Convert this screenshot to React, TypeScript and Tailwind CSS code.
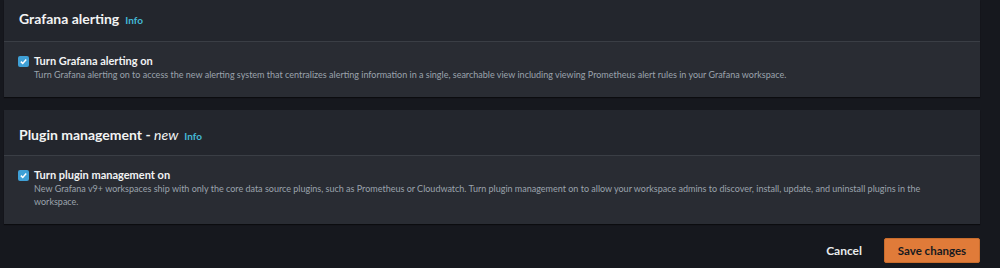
export default function App() {
  return (
    <div className="h-[268px] w-[1000px] overflow-hidden bg-[#16181e] pl-[4px] pr-[20px] font-['Lato',sans-serif] text-[#d1d5db]">
      <div className="flex flex-col">
        <Section
          title={<>Grafana alerting</>}
          label="Turn Grafana alerting on"
          description="Turn Grafana alerting on to access the new alerting system that centralizes alerting information in a single, searchable view including viewing Prometheus alert rules in your Grafana workspace."
          first
        />
        <div className="h-[13px]" />
        <Section
          title={
            <>
              Plugin management - <span className="font-normal italic">new</span>
            </>
          }
          label="Turn plugin management on"
          description="New Grafana v9+ workspaces ship with only the core data source plugins, such as Prometheus or Cloudwatch. Turn plugin management on to allow your workspace admins to discover, install, update, and uninstall plugins in the workspace."
        />
        <div className="mt-[14px] flex items-center justify-end gap-[22px]">
          <button className="text-[12px] font-bold text-[#e9ebed]">Cancel</button>
          <button className="h-[25px] w-[96px] rounded-[2px] border border-[#c86c2c] bg-[#e07b39] text-[11.5px] font-bold text-[#16191f]">
            Save changes
          </button>
        </div>
      </div>
    </div>
  )
}

function Section({
  title,
  label,
  description,
  first,
}: {
  title: React.ReactNode
  label: string
  description: string
  first?: boolean
}) {
  return (
    <div className="bg-[#292c33] shadow-[0_1px_1px_rgba(0,0,0,0.5)]">
      <div
        className={`flex items-baseline gap-[6px] border-b border-[#3a3e45] bg-[#23262d] px-[15px] ${
          first ? 'h-[42px] pt-[8px]' : 'h-[46px] pt-[14px]'
        }`}
      >
        <h2 className="text-[14px] font-bold text-[#f2f3f3]">{title}</h2>
        <a className="text-[10px] font-bold text-[#44b9d6]">Info</a>
      </div>
      <div className="px-[14px] pt-[11px] pb-[16px]">
        <div className="flex gap-[5px]">
          <div className="mt-[3px] flex h-[11px] w-[11px] shrink-0 items-center justify-center rounded-[2px] bg-[#3fa0d6]">
            <svg viewBox="0 0 12 12" className="h-[9px] w-[9px]" fill="none" stroke="white" strokeWidth="2">
              <path d="M2.5 6.2 5 8.6 9.6 3.4" />
            </svg>
          </div>
          <div className="flex flex-col">
            <span className="text-[11px] leading-[15px] font-bold text-[#f2f3f3]">{label}</span>
            <p className="pr-[40px] text-[9px] leading-[13px] text-[#9ba3ad]">{description}</p>
          </div>
        </div>
      </div>
    </div>
  )
}
